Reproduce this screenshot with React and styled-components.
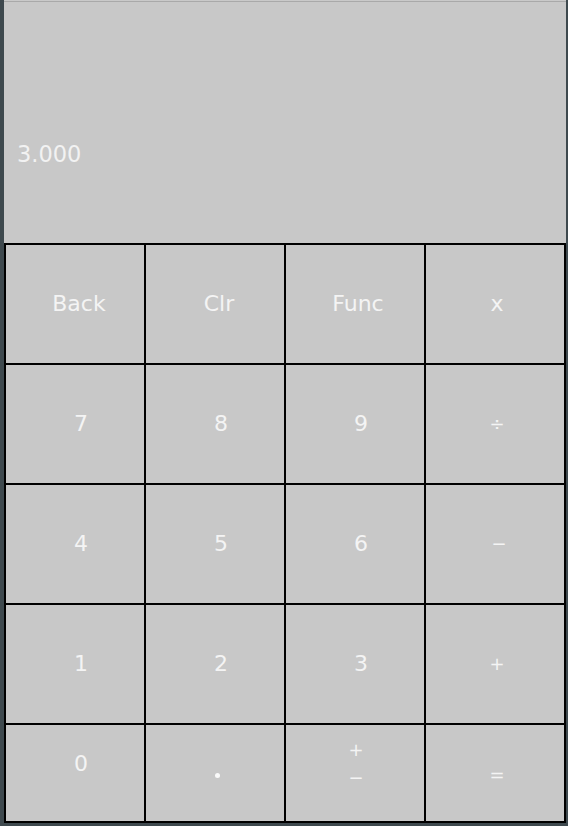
import React from "react";
import styled, { createGlobalStyle } from "styled-components";

const Global = createGlobalStyle`
  html, body { margin: 0; padding: 0; }
  body {
    width: 568px;
    height: 826px;
    background: #3e494e;
    overflow: hidden;
    font-family: "DejaVu Sans", "Liberation Sans", sans-serif;
  }
`;

const Window = styled.div`
  margin-left: 4px;
  width: 562px;
  height: 823px;
  display: flex;
  flex-direction: column;
  background: #c8c8c8;
`;

const Display = styled.div`
  height: 243px;
  box-sizing: border-box;
  border-top: 1px solid #c9c9c9;
  box-shadow: inset 0 2px 0 -1px #a9a9a9;
  padding: 141px 0 0 13px;
  color: #f2f2f2;
  font-size: 22.5px;
  line-height: 24px;
`;

const Keypad = styled.div`
  flex: 1;
  display: grid;
  grid-template-columns: repeat(4, 138px);
  grid-template-rows: repeat(4, 118px) 96px;
  gap: 2px;
  padding: 2px;
  background: #000;
`;

const Key = styled.button`
  all: unset;
  box-sizing: border-box;
  background: #c8c8c8;
  color: #f4f4f4;
  font-family: "DejaVu Sans", "Liberation Sans", sans-serif;
  font-size: ${(p) => p.$size || 22}px;
  display: flex;
  flex-direction: column;
  align-items: center;
  justify-content: center;
  padding-left: ${(p) => p.$dx ?? 12}px;
  padding-top: ${(p) => p.$pt ?? 0}px;
  padding-bottom: ${(p) => p.$pb ?? 0}px;
  line-height: 1;
`;

const Dot = styled.span`
  width: 5px;
  height: 5px;
  border-radius: 50%;
  background: #fafafa;
`;

const Stack = styled.span`
  display: flex;
  flex-direction: column;
  align-items: center;
  gap: 10px;
  font-size: 18px;
`;

const keys = [
  { l: "Back", dx: 8 },
  { l: "Clr", dx: 8 },
  { l: "Func", dx: 6 },
  { l: "x", dx: 4 },
  { l: "7" },
  { l: "8" },
  { l: "9" },
  { l: "÷", size: 18, dx: 4 },
  { l: "4" },
  { l: "5" },
  { l: "6" },
  { l: "−", size: 18, dx: 8 },
  { l: "1" },
  { l: "2" },
  { l: "3" },
  { l: "+", size: 18, dx: 4 },
  { l: "0", pb: 19 },
  { l: "dot", dx: 4, pt: 4 },
  { l: "pm" },
  { l: "=", size: 18, dx: 4, pt: 4 },
];

export default function App() {
  return (
    <>
      <Global />
      <Window>
        <Display>3.000</Display>
        <Keypad>
          {keys.map((k, i) => {
            if (k.l === "pm")
              return (
                <Key key={i} $dx={2} $pb={18}>
                  <Stack>
                    <span>+</span>
                    <span>−</span>
                  </Stack>
                </Key>
              );
            if (k.l === "dot")
              return (
                <Key key={i} $dx={k.dx} $pt={k.pt} aria-label=".">
                  <Dot />
                </Key>
              );
            return (
              <Key key={i} $size={k.size} $dx={k.dx} $pt={k.pt} $pb={k.pb}>
                {k.l}
              </Key>
            );
          })}
        </Keypad>
      </Window>
    </>
  );
}
